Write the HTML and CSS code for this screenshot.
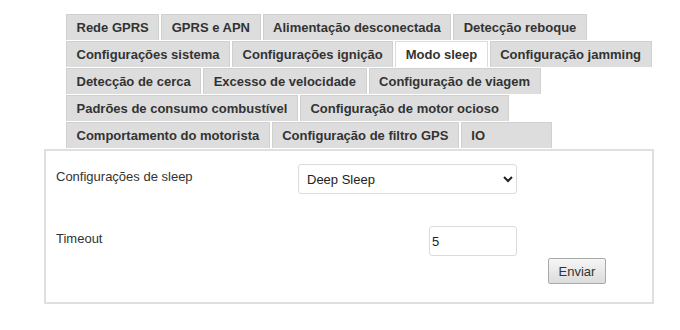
FILE: index.html
```html
<!DOCTYPE html>
<html lang="pt">

<head>
  <meta charset="UTF-8">
  <meta name="viewport" content="width=device-width, initial-scale=1.0">
  <title>Modo sleep</title>
  <link rel="stylesheet" href="styles.css">
</head>

<body>
  <div id="config">
    <!-- abas de configuracao -->
    <ul class="tabs">
      <li class="tab">Rede GPRS</li>
      <li class="tab">GPRS e APN</li>
      <li class="tab">Alimentação desconectada</li>
      <li class="tab">Detecção reboque</li>
      <li class="tab">Configurações sistema</li>
      <li class="tab">Configurações ignição</li>
      <li class="tab active">Modo sleep</li>
      <li class="tab">Configuração jamming</li>
      <li class="tab">Detecção de cerca</li>
      <li class="tab">Excesso de velocidade</li>
      <li class="tab">Configuração de viagem</li>
      <li class="tab">Padrões de consumo combustível</li>
      <li class="tab">Configuração de motor ocioso</li>
      <li class="tab">Comportamento do motorista</li>
      <li class="tab">Configuração de filtro GPS</li>
      <li class="tab tab-io">IO</li>
    </ul>

    <div class="panel">
      <div class="row">
        <label class="label" for="sleep">Configurações de sleep</label>
        <div class="control">
          <select id="sleep" class="select">
            <option>Deep Sleep</option>
            <option>Sleep</option>
            <option>Desligado</option>
          </select>
        </div>
      </div>
      <div class="row row-timeout">
        <label class="label" for="timeout">Timeout</label>
        <div class="control control-right">
          <input id="timeout" class="input" type="text" value="5">
        </div>
      </div>
      <div class="actions">
        <button class="btn">Enviar</button>
      </div>
    </div>
  </div>
</body>

</html>
```

FILE: styles.css
```css
* {
  margin: 0;
  padding: 0;
  box-sizing: border-box;
}

body {
  font-family: "Liberation Sans", Arial, sans-serif;
  color: #333;
  background: #fff;
}

#config {
  padding: 14px 0 0 44px;
}

.tabs {
  list-style: none;
  display: flex;
  flex-wrap: wrap;
  margin-left: 22px;
  width: 600px;
}

.tab {
  height: 26px;
  line-height: 25px;
  padding: 0 9.5px;
  margin: 0 2px 1px 0;
  background: #dddddd;
  border: 1px solid #d0d0d0;
  border-bottom: 0;
  font-size: 13px;
  font-weight: bold;
  color: #333;
  white-space: nowrap;
}

.tab.active {
  background: #fff;
  border-color: #dcdcdc;
}

.tab-io {
  width: 91px;
}

.panel {
  width: 610px;
  border: 2px solid #dfdfdf;
  height: 155px;
  padding: 13px 12px 0 10px;
}

.row {
  display: flex;
  align-items: flex-start;
}

.label {
  width: 242px;
  font-size: 13px;
  padding-top: 5px;
}

.control {
  width: 219px;
}

.control-right {
  display: flex;
  justify-content: flex-end;
}

.row-timeout {
  margin-top: 32px;
}

.select {
  width: 219px;
  height: 30px;
  border: 1px solid #dcdcdc;
  border-radius: 3px;
  background: #fff;
  padding: 0 4px;
  font-family: "Liberation Sans", Arial, sans-serif;
  font-size: 13px;
  color: #222;
}

.input {
  width: 88px;
  height: 30px;
  border: 1px solid #dcdcdc;
  border-radius: 3px;
  padding: 0 2px;
  font-family: "Liberation Sans", Arial, sans-serif;
  font-size: 13px;
  color: #222;
}

.actions {
  display: flex;
  padding-left: 492px;
  margin-top: 2px;
}

.btn {
  width: 58px;
  height: 26px;
  border: 1px solid #a9a9a9;
  border-radius: 2px;
  background: linear-gradient(#f6f6f6, #dcdcdc);
  font-family: "Liberation Sans", Arial, sans-serif;
  font-size: 13px;
  color: #333;
}
```
